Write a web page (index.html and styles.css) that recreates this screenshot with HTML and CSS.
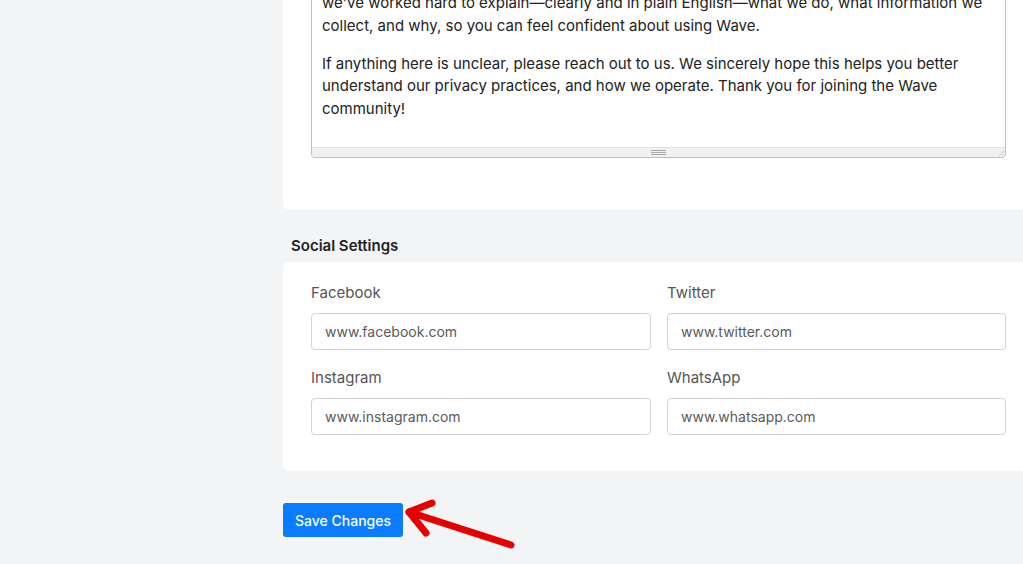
FILE: index.html
```html
<!DOCTYPE html>
<html lang="en">
<head>
<meta charset="utf-8">
<title>Settings</title>
<link rel="stylesheet" href="styles.css">
</head>
<body>
<div class="page">
  <main class="main">
    <section class="card card-top">
      <div class="editor">
        <div class="editor-body">
          <p>we've worked hard to explain—clearly and in plain English—what we do, what information we collect, and why, so you can feel confident about using Wave.</p>
          <p>If anything here is unclear, please reach out to us. We sincerely hope this helps you better understand our privacy practices, and how we operate. Thank you for joining the Wave community!</p>
        </div>
        <div class="editor-status">
          <span class="grip"></span>
          <svg class="corner" width="8" height="8" viewBox="0 0 8 8"><path d="M7 2 L2 7 M7 5 L5 7" stroke="#c4c4c4" stroke-width="1"/></svg>
        </div>
      </div>
    </section>

    <h2 class="section-title">Social Settings</h2>
    <section class="card card-social">
      <div class="grid">
        <div class="field">
          <label>Facebook</label>
          <input type="text" placeholder="www.facebook.com">
        </div>
        <div class="field">
          <label>Twitter</label>
          <input type="text" placeholder="www.twitter.com">
        </div>
        <div class="field">
          <label>Instagram</label>
          <input type="text" placeholder="www.instagram.com">
        </div>
        <div class="field">
          <label>WhatsApp</label>
          <input type="text" placeholder="www.whatsapp.com">
        </div>
      </div>
    </section>

    <div class="actions">
      <button class="btn-primary">Save Changes</button>
      <svg class="arrow" width="120" height="60" viewBox="0 0 120 60">
        <g stroke="#e60000" stroke-width="7" stroke-linecap="round" stroke-linejoin="round" fill="none">
          <path d="M108 46 L6 13"/>
          <path d="M29 4 L6 13 L23 34"/>
        </g>
      </svg>
    </div>
  </main>
</div>
</body>
</html>
```

FILE: styles.css
```css
* { box-sizing: border-box; }
html {
  overflow: hidden;
  background: #f3f4f6;
}
body {
  margin: 0;
  padding: 0 0 40px 0;
  background: #f3f4f6;
  font-family: Inter, "Noto Sans", Arial, sans-serif;
}
.page {
  margin-top: -40px;
  padding-left: 283px;
}
.main {
  width: 751px;
}
.card {
  background: #ffffff;
  border-radius: 6px;
}
.card-top {
  padding: 20px 28px 52px 28px;
  border-bottom: 1px solid #eceef1;
}
.editor {
  border: 1px solid #bfbfbf;
  border-radius: 4px;
  overflow: hidden;
}
.editor-body {
  padding: 11px 10px 27px 10px;
  font-size: 15px;
  line-height: 22.5px;
  color: #222222;
}
.editor-body p {
  margin: 0 0 15.5px 0;
}
.editor-body p:last-child { margin-bottom: 0; }
.editor-status {
  position: relative;
  height: 10px;
  background: #f1f1f1;
  border-top: 1px solid #e2e2e2;
  display: flex;
  justify-content: center;
  align-items: center;
}
.grip {
  width: 15px;
  height: 5px;
  border-top: 1px solid #a8a8a8;
  border-bottom: 1px solid #a8a8a8;
  position: relative;
}
.grip::after {
  content: "";
  position: absolute;
  left: 0; right: 0; top: 1px;
  border-top: 1px solid #a8a8a8;
}
.corner {
  position: absolute;
  right: 0;
  bottom: 0;
}
.section-title {
  margin: 24px 0 5px 8px;
  font-size: 15px;
  line-height: 22px;
  font-weight: 600;
  color: #1f2328;
}
.card-social {
  padding: 20px 28px 36px 28px;
}
.grid {
  display: grid;
  grid-template-columns: 340px 339px;
  column-gap: 16px;
  row-gap: 17px;
}
.field {
  display: flex;
  flex-direction: column;
}
.field label {
  font-size: 15px;
  line-height: 22px;
  color: #555555;
  margin-bottom: 9px;
}
.field input {
  height: 37px;
  border: 1px solid #d3d3d3;
  border-radius: 4px;
  padding: 0 13px;
  font-family: Inter, "Noto Sans", Arial, sans-serif;
  font-size: 14px;
  color: #333;
  background: #fff;
  outline: none;
}
.field input::placeholder {
  color: #5a5a5a;
}
.actions {
  margin-top: 32px;
  position: relative;
}
.btn-primary {
  width: 120px;
  height: 34px;
  border: none;
  border-radius: 3px;
  background: #0a7cff;
  color: #ffffff;
  font-family: Inter, "Noto Sans", Arial, sans-serif;
  font-size: 14px;
  font-weight: 500;
  padding: 0;
}
.arrow {
  position: absolute;
  left: 120px;
  top: -4px;
}
```
